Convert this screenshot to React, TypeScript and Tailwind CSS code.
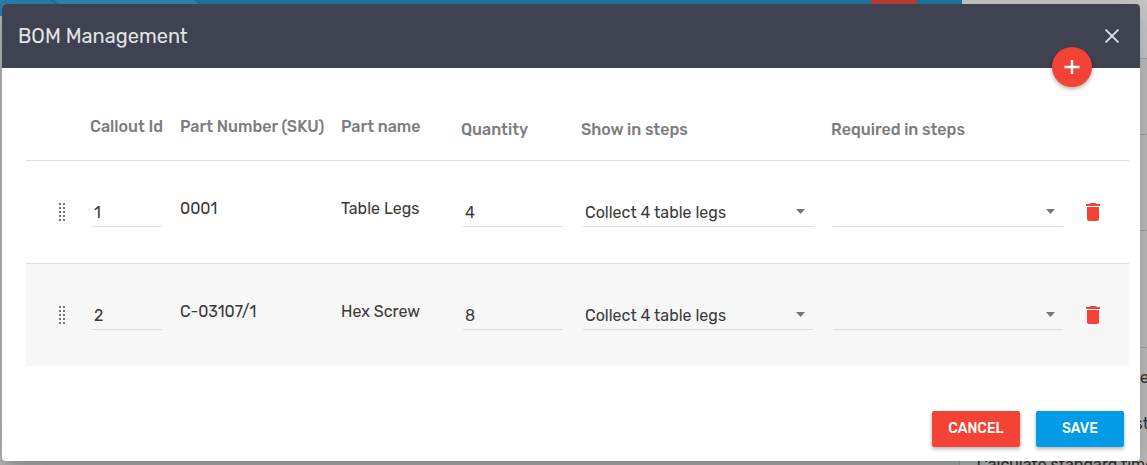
import { useState } from 'react';

const parts = [
  { id: 1, sku: '0001', name: 'Table Legs', quantity: 4, showIn: 'Collect 4 table legs' },
  { id: 2, sku: 'C-03107/1', name: 'Hex Screw', quantity: 8, showIn: 'Collect 4 table legs' },
];

function DragHandle() {
  return (
    <svg width="7" height="18" viewBox="0 0 7 18" fill="#757575" shapeRendering="crispEdges" aria-hidden="true">
      {[0, 4, 8, 12, 16].map((y) => (
        <g key={y}>
          <rect x="0" y={y} width="2" height="2" />
          <rect x="4" y={y} width="2" height="2" />
        </g>
      ))}
    </svg>
  );
}

function StepSelect({ label, value }: { label: string; value: string }) {
  return (
    <div className="relative ml-0.5 mr-[18px]">
      <select
        aria-label={label}
        defaultValue={value}
        className="block h-7 w-full appearance-none border-b border-[#dedede] bg-transparent pl-0.5 pr-6 text-[16px] leading-5 outline-none"
      >
        <option value={value}>{value}</option>
      </select>
      <svg className="pointer-events-none absolute right-2 top-[10px]" width="9" height="5" viewBox="0 0 9 5" fill="#757575" aria-hidden="true">
        <path d="M0 0h9L4.500 5z" />
      </svg>
    </div>
  );
}

function PartRow({ part, last }: { part: (typeof parts)[number]; last: boolean }) {
  const [id, setId] = useState(String(part.id));
  const [quantity, setQuantity] = useState(String(part.quantity));
  const line = last ? '' : 'border-b border-[#dedede]';
  const field = `${line} pt-[38px] pb-9`;
  const text = `${line} pt-[38px]`;
  const input = 'block h-7 border-b border-[#dedede] bg-transparent px-0.5 text-[16px] leading-5 outline-none ml-0.5';

  return (
    <tr className={last ? 'bg-[#f7f7f7] align-top' : 'bg-white align-top'}>
      <td className={field}>
        <div className="flex h-[26px] items-center pl-[33px]">
          <DragHandle />
        </div>
      </td>
      <td className={field}>
        <input aria-label="Callout Id" value={id} onChange={(e) => setId(e.target.value)} className={`${input} w-[70px]`} />
      </td>
      <td className={text}>{part.sku}</td>
      <td className={text}>{part.name}</td>
      <td className={field}>
        <input aria-label="Quantity" value={quantity} onChange={(e) => setQuantity(e.target.value)} className={`${input} w-[100px]`} />
      </td>
      <td className={field}>
        <StepSelect label="Show in steps" value={part.showIn} />
      </td>
      <td className={field}>
        <StepSelect label="Required in steps" value="" />
      </td>
      <td className={field}>
        <button type="button" aria-label="Delete part" className="flex h-[26px] w-6 items-center justify-center text-[#f44336]">
          <svg width="24" height="24" viewBox="0 0 24 24" fill="currentColor" aria-hidden="true">
            <path d="M6 19c0 1.100.9 2 2 2h8c1.100 0 2-.9 2-2V7H6v12zM19 4h-3.500l-1-1h-5l-1 1H5v2h14V4z" />
          </svg>
        </button>
      </td>
    </tr>
  );
}

function Backdrop() {
  return (
    <div className="absolute inset-0 overflow-hidden bg-[#b6b6b6] text-[16px] text-[#333]">
      <aside className="absolute inset-y-0 right-0 w-[188px] border-l border-[#a3a3a3] bg-[#c0c0c0] leading-5">
        <div className="h-[59px] border-b border-[#a3a3a3] bg-[#c9c9c9]"></div>
        <div className="h-[76px] border-b border-[#a3a3a3]"></div>
        <div className="h-24 border-b border-[#a3a3a3]"></div>
        <div className="h-[117px] border-b border-[#a3a3a3]"></div>
        <div className="-mr-0.5 text-right">
          <p className="pt-5">e</p>
          <p className="pt-[26px]">st</p>
        </div>
        <p className="whitespace-nowrap pl-[17px] pt-[21px]">Calculate standard time</p>
      </aside>
      <div className="relative mr-[185px] flex h-4 justify-end bg-[#1f77a3] pr-[45px]">
        <svg className="absolute left-0 top-0" width="210" height="16" viewBox="0 0 210 16" aria-hidden="true">
          <path d="M0 0h50l22 16H0z" fill="#2781ac" />
          <path d="M54 0h140l16 16H76z" fill="#3089b5" />
        </svg>
        <div className="h-4 w-[46px] bg-[#c43e35]"></div>
      </div>
    </div>
  );
}

export default function App() {
  return (
    <div className="relative min-h-screen pt-1 pr-[7px] pb-1 pl-0.5" style={{ fontFamily: 'Rubik, Roboto, sans-serif' }}>
      <Backdrop />
      <div role="dialog" aria-labelledby="bom-title" className="relative rounded bg-white text-[#3a3a3a] shadow-[0_9px_46px_8px_rgba(0,0,0,0.14),0_11px_15px_-7px_rgba(0,0,0,0.2)]">
        <header className="flex h-16 items-center justify-between rounded-t bg-[#3e4251] px-4 text-[#e3e4e6]">
          <h2 id="bom-title" className="text-[20px] leading-7">BOM Management</h2>
          <button type="button" aria-label="Close" className="flex h-6 w-6 items-center justify-center">
            <svg width="14" height="14" viewBox="0 0 14 14" fill="none" stroke="currentColor" strokeWidth="1.800" aria-hidden="true">
              <path d="M.6.6l12.800 12.800M13.400.6L.6 13.400" />
            </svg>
          </button>
        </header>
        <button
          type="button"
          aria-label="Add part"
          className="absolute right-12 top-[43px] flex h-10 w-10 items-center justify-center rounded-full bg-[#f44336] text-white shadow-[0_2px_4px_rgba(0,0,0,0.3)]"
        >
          <svg width="16" height="16" viewBox="0 0 16 16" stroke="currentColor" strokeWidth="2.400" aria-hidden="true">
            <path d="M8 1v14M.5 8h15" />
          </svg>
        </button>

        <div className="pl-6 pr-[11px] pt-6">
          <table className="w-full table-fixed border-separate border-spacing-0 text-[16px] leading-5">
            <thead>
              <tr className="text-left align-top text-[#7d7d7d] *:border-b *:border-[#dedede] *:pb-5 *:font-medium">
                <th className="w-16" aria-label="Reorder"></th>
                <th className="w-[90px] pt-[25px]">Callout Id</th>
                <th className="w-[161px] pt-[25px]">Part Number (SKU)</th>
                <th className="w-[120px] pt-[25px]">Part name</th>
                <th className="w-[120px] pt-7">Quantity</th>
                <th className="pt-7">Show in steps</th>
                <th className="pt-7">Required in steps</th>
                <th className="w-12" aria-label="Delete"></th>
              </tr>
            </thead>
            <tbody>
              {parts.map((part, i) => (
                <PartRow key={part.id} part={part} last={i === parts.length - 1} />
              ))}
            </tbody>
          </table>
        </div>

        <footer className="flex justify-end gap-4 px-4 pb-[14px] pt-[45px] text-[14px] font-medium leading-5 text-white">
          <button type="button" className="h-9 w-[88px] rounded-xs bg-[#f44336] pb-px shadow-[0_2px_4px_rgba(0,0,0,0.3)]">CANCEL</button>
          <button type="button" className="h-9 w-[88px] rounded-xs bg-[#039be5] pb-px shadow-[0_2px_4px_rgba(0,0,0,0.3)]">SAVE</button>
        </footer>
      </div>
    </div>
  );
}
